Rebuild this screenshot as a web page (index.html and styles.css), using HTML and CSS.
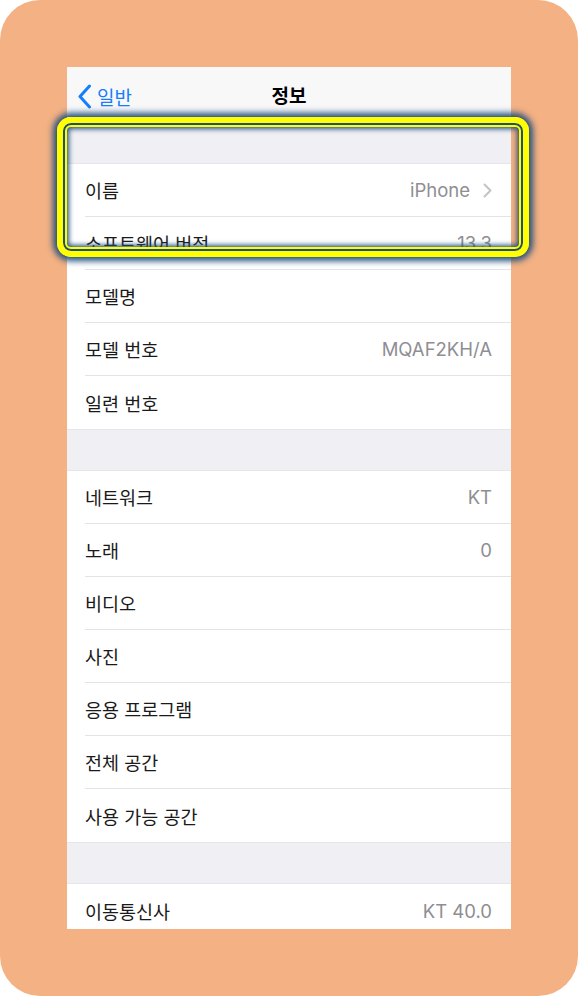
FILE: index.html
```html
<!DOCTYPE html>
<html lang="ko">
<head>
  <meta charset="UTF-8">
  <meta name="viewport" content="width=device-width, initial-scale=1.0">
  <title>정보</title>
  <link rel="stylesheet" href="styles.css">
</head>
<body>
  <div class="frame">
    <div class="screen-wrap">
      <div class="screen">
        <!-- Navigation Bar -->
        <div class="nav-bar">
          <div class="back">
            <svg class="back-icon" width="15" height="25" viewBox="0 0 15 25">
              <path d="M12.5 2 L3 12.5 L12.5 23" fill="none" stroke="#157efb" stroke-width="3" stroke-linecap="round" stroke-linejoin="round"/>
            </svg>
            <span>일반</span>
          </div>
          <div class="title">정보</div>
        </div>

        <div class="section-gap"></div>

        <div class="group">
          <div class="row"><span class="label">이름</span><span class="value">iPhone<svg class="chevron" width="9" height="15" viewBox="0 0 9 15"><path d="M1.5 1.5 L7.5 7.5 L1.5 13.5" fill="none" stroke="#c4c4c8" stroke-width="2" stroke-linecap="round" stroke-linejoin="round"/></svg></span></div>
          <div class="row"><span class="label">소프트웨어 버전</span><span class="value">13.3</span></div>
          <div class="row"><span class="label">모델명</span><span class="value"></span></div>
          <div class="row"><span class="label">모델 번호</span><span class="value">MQAF2KH/A</span></div>
          <div class="row"><span class="label">일련 번호</span><span class="value"></span></div>
        </div>

        <div class="section-gap"></div>

        <div class="group">
          <div class="row"><span class="label">네트워크</span><span class="value">KT</span></div>
          <div class="row"><span class="label">노래</span><span class="value">0</span></div>
          <div class="row"><span class="label">비디오</span><span class="value"></span></div>
          <div class="row"><span class="label">사진</span><span class="value"></span></div>
          <div class="row"><span class="label">응용 프로그램</span><span class="value"></span></div>
          <div class="row"><span class="label">전체 공간</span><span class="value"></span></div>
          <div class="row"><span class="label">사용 가능 공간</span><span class="value"></span></div>
        </div>

        <div class="section-gap"></div>

        <div class="group">
          <div class="row"><span class="label">이동통신사</span><span class="value">KT 40.0</span></div>
        </div>
      </div>

      <!-- Highlight box over the first rows -->
      <div class="highlight"></div>
    </div>
  </div>
</body>
</html>
```

FILE: styles.css
```css
body {
  margin: 0;
  padding: 0;
  background-color: #ffffff;
  font-family: "Inter", "Noto Sans CJK KR", sans-serif;
}

.frame {
  width: 578px;
  height: 996px;
  box-sizing: border-box;
  padding: 67px 67px 0 67px;
  background-color: #f4b183;
  border-radius: 40px;
}

.screen-wrap {
  position: relative;
  width: 444px;
  height: 862px;
}

.screen {
  width: 100%;
  height: 100%;
  overflow: hidden;
  background-color: #ffffff;
}

/* Navigation Bar */
.nav-bar {
  position: relative;
  height: 55px;
  background-color: #f8f8f9;
  display: flex;
  align-items: center;
  justify-content: center;
}

.back {
  position: absolute;
  left: 10px;
  top: 16px;
  display: flex;
  align-items: center;
  gap: 5px;
  color: #157efb;
  font-size: 19px;
}

.title {
  font-size: 19px;
  font-weight: bold;
  color: #000000;
}

.section-gap {
  height: 42px;
  box-sizing: border-box;
  background-color: #efeff4;
  border-top: 1px solid #e6e6ea;
  border-bottom: 1px solid #e6e6ea;
}

.group {
  background-color: #ffffff;
}

.row {
  height: 53px;
  margin-left: 18px;
  padding-right: 19px;
  display: flex;
  align-items: center;
  justify-content: space-between;
  border-bottom: 1px solid #e4e4e8;
  box-sizing: border-box;
}

.row:last-child {
  border-bottom: none;
}

.label {
  font-size: 18.5px;
  color: #1a1a1a;
}

.value {
  font-size: 18.5px;
  color: #8e8e93;
  display: flex;
  align-items: center;
}

.chevron {
  margin-left: 13px;
}

/* Highlight box */
.highlight {
  position: absolute;
  left: -10px;
  top: 50px;
  width: 472px;
  height: 140px;
  box-sizing: border-box;
  border: 6px solid #ffff00;
  border-radius: 14px;
  box-shadow:
    0 0 6px 4px #24507d,
    inset 0 0 0 2px #1f4e79,
    inset 0 0 0 4px #ffff00,
    inset 0 0 5px 6px rgba(31, 78, 121, 0.95);
}
```
